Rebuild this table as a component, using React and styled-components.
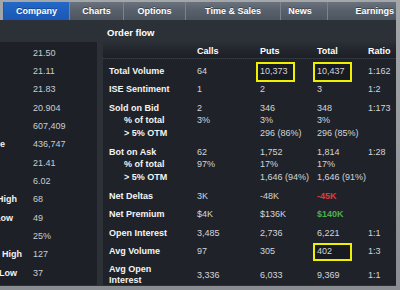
import React from "react";
import styled, { createGlobalStyle, css } from "styled-components";

const Global = createGlobalStyle`
  html, body { margin: 0; padding: 0; background: #8d9094; }
  body { font-family: "Liberation Sans", Arial, sans-serif; }
`;

const Frame = styled.div`
  width: 400px;
  height: 290px;
  box-sizing: border-box;
  padding: 2px 4px 4px 0;
  background: linear-gradient(#a4a7aa, #8a8d91);
  display: flex;
  flex-direction: column;
`;

const TabBar = styled.div`
  height: 18px;
  flex-shrink: 0;
  margin-left: 3px;
  display: flex;
  background: linear-gradient(#6a737d, #59626c 45%, #4d5660);
`;

const Tab = styled.div`
  width: ${(p) => p.$w}px;
  flex-shrink: 0;
  box-sizing: border-box;
  display: flex;
  align-items: center;
  justify-content: ${(p) => (p.$right ? "flex-end" : "center")};
  padding-right: ${(p) => p.$pr || 0}px;
  font-size: 9px;
  font-weight: bold;
  color: #ffffff;
  text-shadow: 0 -1px 0 rgba(0, 0, 0, 0.35);
  border-left: 1px solid ${(p) => (p.$first ? "transparent" : "#7b848e")};
  ${(p) =>
    p.$active &&
    css`
      background: linear-gradient(#2468c8, #1a58b4);
      border-left-color: #1a58b4;
    `}
`;

const Main = styled.div`
  flex: 1;
  display: flex;
  gap: 6px;
  padding-bottom: 1px;
  background: #2c3138;
  min-height: 0;
`;

const LeftCol = styled.div`
  width: 97px;
  padding-top: 22px;
  display: flex;
  flex-direction: column;
`;

const LeftPanel = styled.div`
  flex: 1;
  background: #1d2127;
  overflow: hidden;
  padding-top: 1.5px;
`;

const LeftRow = styled.div`
  height: 18.33px;
  display: grid;
  grid-template-columns: 30px 1fr;
  column-gap: 3px;
  align-items: center;
  font-size: 9px;
`;

const LeftLabel = styled.div`
  display: flex;
  justify-content: flex-end;
  padding-right: ${(p) => p.$pr}px;
  white-space: nowrap;
  font-weight: bold;
  color: #f2f2f2;
  min-width: 0;
`;

const LeftValue = styled.div`
  color: #c9cdd2;
  white-space: nowrap;
`;

const RightCol = styled.div`
  flex: 1;
  display: flex;
  flex-direction: column;
  min-width: 0;
`;

const Title = styled.div`
  height: 22px;
  flex-shrink: 0;
  display: flex;
  align-items: center;
  padding-left: 4px;
  padding-top: 3px;
  box-sizing: border-box;
  font-size: 9.5px;
  font-weight: bold;
  color: #ffffff;
`;

const Table = styled.div`
  flex: 1;
  min-height: 0;
  background: #1f2329;
  display: flex;
  flex-direction: column;
`;

const cols = "94px 63px 57px 51px 1fr";

const HeadRow = styled.div`
  height: 16.5px;
  flex-shrink: 0;
  padding-top: 2.5px;
  display: grid;
  grid-template-columns: ${cols};
  align-items: center;
  background: linear-gradient(#2a2e35, #1c1f25);
  border-bottom: 1px dotted #3a3f47;
  box-sizing: border-box;
  font-size: 9px;
  font-weight: bold;
  color: #ffffff;
`;

const Row = styled.div`
  flex-shrink: 0;
  display: grid;
  grid-template-columns: ${cols};
  align-items: center;
  font-size: 9px;
  line-height: ${(p) => (p.$sub ? 12.75 : 12.5)}px;
  padding-top: ${(p) => (p.$sub ? 0 : 6)}px;
`;

const Label = styled.div`
  padding-left: ${(p) => (p.$sub ? 21 : 6)}px;
  font-weight: bold;
  color: #f4f4f4;
  white-space: nowrap;
  line-height: ${(p) => (p.$two ? "11.5px" : "inherit")};
`;

const Cell = styled.div`
  white-space: nowrap;
  color: ${(p) =>
    p.$tone === "red" ? "#e23a3a" : p.$tone === "green" ? "#4fae4f" : "#d2d5d9"};
  font-weight: ${(p) => (p.$tone ? "bold" : "normal")};
`;

const Mark = styled.span`
  position: relative;
  isolation: isolate;
  &::before {
    content: "";
    position: absolute;
    z-index: -1;
    left: -4px;
    top: ${(p) => (p.$short ? -3 : -4)}px;
    width: 39px;
    height: ${(p) => (p.$short ? 18 : 20)}px;
    box-sizing: border-box;
    border: 2px solid #eef000;
    background: #171a20;
  }
`;

const tabs = [
  { t: "Company", w: 66, active: true, first: true },
  { t: "Charts", w: 54 },
  { t: "Options", w: 62 },
  { t: "Time & Sales", w: 95 },
  { t: "News", w: 47, pr: 8 },
  { t: "Earnings", w: 69, right: true, pr: 2 },
];

const leftRows = [
  { v: "21.50" },
  { v: "21.11" },
  { v: "21.83" },
  { v: "20.904" },
  { v: "607,409" },
  { l: "Volume", end: 5, v: "436,747" },
  { v: "21.41" },
  { v: "6.02" },
  { l: "High", end: 17, v: "68" },
  { l: "Low", end: 13, v: "49" },
  { v: "25%" },
  { l: "High", end: 22, v: "127" },
  { l: "Low", end: 17, v: "37" },
];

const rows = [
  { l: "Total Volume", c: ["64", { v: "10,373", mark: true }, { v: "10,437", mark: true }, "1:162"] },
  { l: "ISE Sentiment", c: [" 1", " 2", " 3", "1:2"] },
  { l: "Sold on Bid", c: [" 2", "346", "348", "1:173"] },
  { l: "% of total", sub: true, c: ["3%", "3%", "3%", ""] },
  { l: "> 5% OTM", sub: true, c: ["", "296 (86%)", "296 (85%)", ""] },
  { l: "Bot on Ask", c: ["62", "1,752", "1,814", "1:28"] },
  { l: "% of total", sub: true, c: ["97%", "17%", "17%", ""] },
  { l: "> 5% OTM", sub: true, c: ["", "1,646 (94%)", "1,646 (91%)", ""] },
  { l: "Net Deltas", c: ["3K", "-48K", { v: "-45K", tone: "red" }, ""] },
  { l: "Net Premium", c: ["$4K", "$136K", { v: "$140K", tone: "green" }, ""] },
  { l: "Open Interest", c: ["3,485", "2,736", "6,221", "1:1"] },
  { l: "Avg Volume", c: ["97", "305", { v: "402", mark: true, short: true }, "1:3"] },
  { l: ["Avg Open", "Interest"], c: ["3,336", "6,033", "9,369", "1:1"] },
];

function renderCell(c, i) {
  if (typeof c === "string") return <Cell key={i}>{c}</Cell>;
  return (
    <Cell key={i} $tone={c.tone}>
      {c.mark ? <Mark $short={c.short}>{c.v}</Mark> : c.v}
    </Cell>
  );
}

export default function App() {
  return (
    <>
      <Global />
      <Frame>
        <TabBar>
          {tabs.map((t) => (
            <Tab
              key={t.t}
              $w={t.w}
              $active={t.active}
              $first={t.first}
              $right={t.right}
              $pr={t.pr}
            >
              {t.t}
            </Tab>
          ))}
        </TabBar>
        <Main>
          <LeftCol>
            <LeftPanel>
              {leftRows.map((r, i) => (
                <LeftRow key={i}>
                  <LeftLabel $pr={r.end ? 30 - r.end : 0}>{r.l || ""}</LeftLabel>
                  <LeftValue>{r.v}</LeftValue>
                </LeftRow>
              ))}
            </LeftPanel>
          </LeftCol>
          <RightCol>
            <Title>Order flow</Title>
            <Table>
              <HeadRow>
                <div />
                <div>Calls</div>
                <div>Puts</div>
                <div>Total</div>
                <div>Ratio</div>
              </HeadRow>
              {rows.map((r, i) => (
                <Row key={i} $sub={r.sub}>
                  <Label $sub={r.sub} $two={Array.isArray(r.l)}>
                    {Array.isArray(r.l) ? (
                      <>
                        {r.l[0]}
                        <br />
                        {r.l[1]}
                      </>
                    ) : (
                      r.l
                    )}
                  </Label>
                  {r.c.map(renderCell)}
                </Row>
              ))}
            </Table>
          </RightCol>
        </Main>
      </Frame>
    </>
  );
}
